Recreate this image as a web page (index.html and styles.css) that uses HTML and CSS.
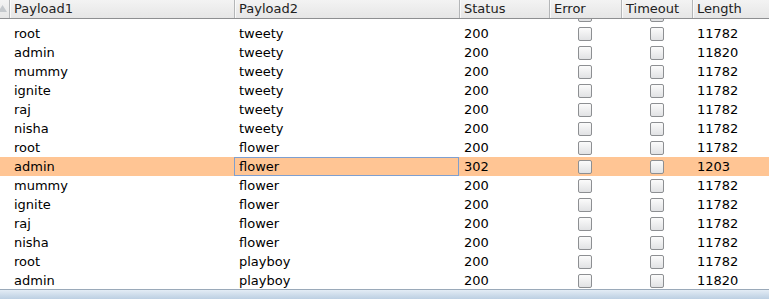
FILE: index.html
```html
<!DOCTYPE html>
<html lang="en">
<head>
    <meta charset="UTF-8">
    <title>Intruder Results</title>
    <link rel="stylesheet" href="styles.css">
</head>
<body>
    <div class="results">
        <!-- Column headers -->
        <div class="row head">
            <div class="hcell sort"><svg width="9" height="18" viewBox="0 0 9 18"><polygon points="-2,12 2.5,5 7,12" fill="#c4c8cc"/></svg></div>
            <div class="hcell">Payload1</div>
            <div class="hcell">Payload2</div>
            <div class="hcell">Status</div>
            <div class="hcell">Error</div>
            <div class="hcell">Timeout</div>
            <div class="hcell">Length</div>
        </div>

        <div class="viewport">
            <div class="rows">
                <!-- row scrolled mostly out of view: only its checkboxes show -->
                <div class="row"><div></div><div class="cell"></div><div class="cell"></div><div class="cell"></div><div class="cell box"><span class="check"></span></div><div class="cell box"><span class="check"></span></div><div class="cell"></div></div>
                <div class="row"><div></div><div class="cell">root</div><div class="cell">tweety</div><div class="cell">200</div><div class="cell box"><span class="check"></span></div><div class="cell box"><span class="check"></span></div><div class="cell">11782</div></div>
                <div class="row"><div></div><div class="cell">admin</div><div class="cell">tweety</div><div class="cell">200</div><div class="cell box"><span class="check"></span></div><div class="cell box"><span class="check"></span></div><div class="cell">11820</div></div>
                <div class="row"><div></div><div class="cell">mummy</div><div class="cell">tweety</div><div class="cell">200</div><div class="cell box"><span class="check"></span></div><div class="cell box"><span class="check"></span></div><div class="cell">11782</div></div>
                <div class="row"><div></div><div class="cell">ignite</div><div class="cell">tweety</div><div class="cell">200</div><div class="cell box"><span class="check"></span></div><div class="cell box"><span class="check"></span></div><div class="cell">11782</div></div>
                <div class="row"><div></div><div class="cell">raj</div><div class="cell">tweety</div><div class="cell">200</div><div class="cell box"><span class="check"></span></div><div class="cell box"><span class="check"></span></div><div class="cell">11782</div></div>
                <div class="row"><div></div><div class="cell">nisha</div><div class="cell">tweety</div><div class="cell">200</div><div class="cell box"><span class="check"></span></div><div class="cell box"><span class="check"></span></div><div class="cell">11782</div></div>
                <div class="row"><div></div><div class="cell">root</div><div class="cell">flower</div><div class="cell">200</div><div class="cell box"><span class="check"></span></div><div class="cell box"><span class="check"></span></div><div class="cell">11782</div></div>
                <div class="row selected"><div></div><div class="cell">admin</div><div class="cell focus">flower</div><div class="cell">302</div><div class="cell box"><span class="check"></span></div><div class="cell box"><span class="check"></span></div><div class="cell">1203</div></div>
                <div class="row"><div></div><div class="cell">mummy</div><div class="cell">flower</div><div class="cell">200</div><div class="cell box"><span class="check"></span></div><div class="cell box"><span class="check"></span></div><div class="cell">11782</div></div>
                <div class="row"><div></div><div class="cell">ignite</div><div class="cell">flower</div><div class="cell">200</div><div class="cell box"><span class="check"></span></div><div class="cell box"><span class="check"></span></div><div class="cell">11782</div></div>
                <div class="row"><div></div><div class="cell">raj</div><div class="cell">flower</div><div class="cell">200</div><div class="cell box"><span class="check"></span></div><div class="cell box"><span class="check"></span></div><div class="cell">11782</div></div>
                <div class="row"><div></div><div class="cell">nisha</div><div class="cell">flower</div><div class="cell">200</div><div class="cell box"><span class="check"></span></div><div class="cell box"><span class="check"></span></div><div class="cell">11782</div></div>
                <div class="row"><div></div><div class="cell">root</div><div class="cell">playboy</div><div class="cell">200</div><div class="cell box"><span class="check"></span></div><div class="cell box"><span class="check"></span></div><div class="cell">11782</div></div>
                <div class="row"><div></div><div class="cell">admin</div><div class="cell">playboy</div><div class="cell">200</div><div class="cell box"><span class="check"></span></div><div class="cell box"><span class="check"></span></div><div class="cell">11820</div></div>
            </div>
        </div>

        <!-- Horizontal scrollbar -->
        <div class="hscroll"></div>
    </div>
</body>
</html>
```

FILE: styles.css
```css
body {
    margin: 0;
    background: #fff;
    font-family: 'DejaVu Sans', sans-serif;
    font-size: 13px;
    color: #000;
    overflow: hidden;
}

.results {
    width: 769px;
    height: 299px;
    display: flex;
    flex-direction: column;
}

.row {
    display: grid;
    grid-template-columns: 9px 225px 225px 90px 72px 71px 77px;
    height: 19px;
    line-height: 19px;
}

/* Header */
.head {
    height: 18px;
    line-height: 17px;
    border-bottom: 1px solid #8e8f91;
    background: linear-gradient(#f3f3f3, #e6e6e6);
    color: #222;
    position: relative;
    z-index: 1;
}

.hcell {
    padding-left: 4px;
    border-left: 1px solid #b4b6b8;
    box-shadow: inset 1px 0 0 #fafafa;
    white-space: nowrap;
    overflow: hidden;
}

.hcell.sort {
    padding: 0;
    border-left: none;
    box-shadow: none;
}

.hcell.sort svg {
    display: block;
}

/* Body rows */
.viewport {
    height: 271px;
    overflow: hidden;
}

.rows {
    margin-top: -14px;
}

.cell {
    padding-left: 5px;
    white-space: nowrap;
    overflow: hidden;
}

.cell.box {
    padding: 0;
    display: flex;
    justify-content: center;
    align-items: center;
}

.check {
    width: 12px;
    height: 12px;
    border: 1px solid #8d8f92;
    border-radius: 2px;
    background: linear-gradient(#fbfbfb, #e1e2e4);
}

.selected {
    background: #ffc594;
}

.focus {
    box-shadow: inset 0 0 0 1px #7f9fcf;
}

.hscroll {
    height: 9px;
    border-top: 1px solid #9aa9b9;
    background: linear-gradient(#e3ecf5, #bccfe2);
}
```
